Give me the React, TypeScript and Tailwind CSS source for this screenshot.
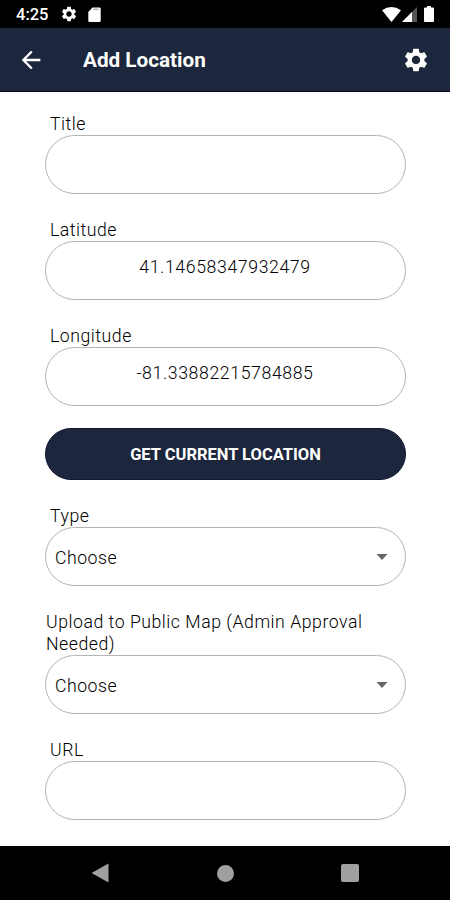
import type { ReactNode } from "react";
import { MdArrowBack, MdSettings } from "react-icons/md";

const LATITUDE = "41.14658347932479";
const LONGITUDE = "-81.33882215784885";

export default function App() {
  return (
    <div className="flex h-[900px] w-[450px] flex-col overflow-hidden bg-white font-['Roboto',sans-serif] text-black">
      <StatusBar />
      <Header title="Add Location" />

      <main className="flex flex-1 flex-col gap-[25px] overflow-hidden pt-[21px] pr-11 pl-[45px]">
        <Field label="Title" />
        <Field label="Latitude">
          <Value>{LATITUDE}</Value>
        </Field>
        <Field label="Longitude">
          <Value>{LONGITUDE}</Value>
        </Field>

        <button
          type="button"
          className="-mt-[3px] h-[52px] shrink-0 rounded-full border border-[#10172e] bg-[#1c263c] pt-0.5 text-[16.5px] font-bold text-white"
        >
          GET CURRENT LOCATION
        </button>

        <Field label="Type">
          <Picker />
        </Field>
        <Field label="Upload to Public Map (Admin Approval Needed)" wide>
          <Picker />
        </Field>
        <Field label="URL" />
      </main>

      <NavBar />
    </div>
  );
}

function StatusBar() {
  return (
    <div className="flex h-7 shrink-0 items-center bg-black pr-4 pl-4 text-white">
      <span className="w-[33px] pt-[3px] text-[16.5px] font-medium">4:25</span>
      <MdSettings className="ml-[11px] size-[18px]" />
      <svg viewBox="0 0 13 15" className="mt-px ml-2.5 h-[15px] w-[13px]">
        <path
          d="M4.500 0.500h7A1.200 1.200 0 0 1 12.700 1.700v12a1.200 1.200 0 0 1-1.200 1.200h-10A1.200 1.200 0 0 1 0.300 13.700V5z"
          fill="currentColor"
        />
        <path d="M5.500 2.200h5" stroke="#888" strokeWidth="1" />
      </svg>

      <div className="ml-auto flex items-center">
        <svg viewBox="0 0 19 15" className="h-[15px] w-[19px]">
          <path d="M0 3.200Q9.500-3 19 3.200L9.500 15z" fill="currentColor" />
        </svg>
        <svg viewBox="0 0 15 15" className="ml-px h-[15px] w-[15px]">
          <path d="M15 0v15H0z" fill="#555" />
          <path d="M10 5V15H0z" fill="currentColor" />
        </svg>
        <svg viewBox="0 0 10 16" className="ml-[7px] h-4 w-2.5">
          <path
            d="M3 0h4v1.500h2a1 1 0 0 1 1 1V15a1 1 0 0 1-1 1H1a1 1 0 0 1-1-1V2.500a1 1 0 0 1 1-1h2z"
            fill="currentColor"
          />
        </svg>
      </div>
    </div>
  );
}

function Header({ title }: { title: string }) {
  return (
    <header className="flex h-16 shrink-0 items-center border-b border-[#080d18] bg-[#1c263c] pr-5 pl-[17px] text-white">
      <MdArrowBack className="size-[28px]" />
      <h1 className="ml-[38px] pt-[3px] text-[20.7px] font-bold">{title}</h1>
      <MdSettings className="ml-auto size-[28px]" />
    </header>
  );
}

function Field({
  label,
  wide = false,
  children,
}: {
  label: string;
  wide?: boolean;
  children?: ReactNode;
}) {
  return (
    <div className="shrink-0">
      <div
        className={`text-[17.7px] leading-[22px] font-light tracking-[0.52px] ${wide ? "pl-px" : "pl-[5px]"}`}
      >
        {label}
      </div>
      <div className="h-[59px] rounded-full border border-[#b4b4b4]">{children}</div>
    </div>
  );
}

function Value({ children }: { children: ReactNode }) {
  return (
    <div className="pt-3.5 pr-px text-center text-[17.7px] leading-[22px] font-light tracking-[0.6px]">
      {children}
    </div>
  );
}

function Picker() {
  return (
    <div className="flex h-full items-center justify-between pt-[3px] pr-[17px] pl-[9px] text-[17.7px] font-light tracking-[0.5px]">
      <span>Choose</span>
      <svg viewBox="0 0 12 6" className="mb-[3px] h-1.5 w-3">
        <path d="M0.500 0h11L6 6z" fill="#666" />
      </svg>
    </div>
  );
}

function NavBar() {
  return (
    <nav className="flex h-[54px] shrink-0 items-center justify-between bg-black pr-[91px] pl-[91px] text-[#a0a0a0]">
      <svg viewBox="0 0 18 20" className="h-5 w-[18px]">
        <path d="M17.500 0.500v19L0.500 10z" fill="currentColor" />
      </svg>
      <div className="size-[17px] rounded-full bg-[#a0a0a0]" />
      <div className="size-[18px] rounded-[2px] bg-[#a0a0a0]" />
    </nav>
  );
}
